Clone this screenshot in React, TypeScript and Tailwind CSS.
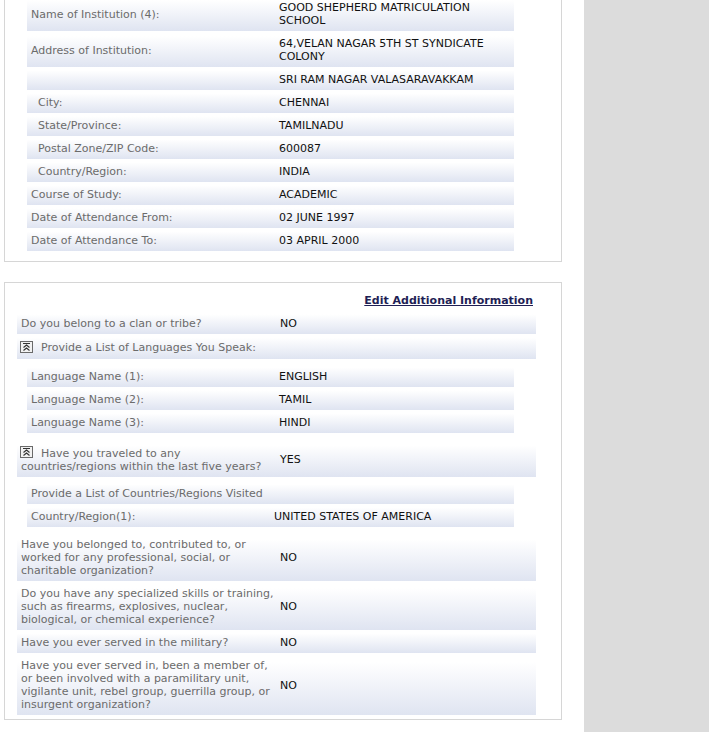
import React from "react";

/**
 * Gözden geçirme sayfası — eğitim bilgisi ve ek bilgiler.
 * Satırlar: gri etiket solda, siyah değer sağda, alttan mavimsi geçişli zemin.
 */

const rowBg = "bg-[linear-gradient(to_bottom,#ffffff_15%,#dfe4f1)]";
const pad = "pt-[6px] pb-[4px]";
const label = "pl-[4px] text-[#6b6b6b] whitespace-nowrap";
const value = "text-[#111] whitespace-nowrap";

function Collapse() {
  return (
    <svg
      width="13"
      height="12"
      viewBox="0 0 13 12"
      className="inline-block align-[-1px] mr-[8px]"
    >
      <rect x="0.5" y="0.5" width="12" height="11" fill="#f2f2f2" stroke="#6a6a6a" />
      <path d="M3 2.5h7" stroke="#333" strokeWidth="1" />
      <path d="M3.5 6.5l3-2.5 3 2.5M3.5 9.5l3-2.5 3 2.5" fill="none" stroke="#333" strokeWidth="1.1" />
    </svg>
  );
}

type Row = { l: React.ReactNode; v: string; sub?: boolean };

function SubRow({ l, v, sub }: Row) {
  return (
    <div className={`flex items-center ${rowBg} ${pad}`}>
      <div className={`${label} w-[252px] ${sub ? "pl-[11px]" : ""}`}>{l}</div>
      <div className={value}>{v}</div>
    </div>
  );
}

function OuterRow({ l, v }: { l: React.ReactNode; v: string }) {
  return (
    <div className={`flex items-center ${pad} ${rowBg}`}>
      <div className={`${label} w-[263px]`}>{l}</div>
      <div className={value}>{v}</div>
    </div>
  );
}

const school: Row[] = [
  { l: "", v: "SRI RAM NAGAR VALASARAVAKKAM" },
  { l: "City:", v: "CHENNAI", sub: true },
  { l: "State/Province:", v: "TAMILNADU", sub: true },
  { l: "Postal Zone/ZIP Code:", v: "600087", sub: true },
  { l: "Country/Region:", v: "INDIA", sub: true },
  { l: "Course of Study:", v: "ACADEMIC" },
  { l: "Date of Attendance From:", v: "02 JUNE 1997" },
  { l: "Date of Attendance To:", v: "03 APRIL 2000" },
];

export default function App() {
  return (
    <div className="flex min-h-screen bg-white font-['DejaVu_Sans',Verdana,sans-serif] text-[11px] leading-[13px]">
      <div className="w-[584px] shrink-0 pl-[4px] pr-[22px] pb-[12px]">
        {/* Okul paneli (üstü kaydırılmış) */}
        <div className="-mt-[5px] border border-t-0 border-[#d6d6d6] pl-[22px] pb-[10px]">
          <div className="w-[487px]">
            <div className={`flex items-center ${pad} ${rowBg}`}>
              <div className={`${label} w-[252px]`}>Name of Institution (4):</div>
              <div className={value}>
                GOOD SHEPHERD MATRICULATION
                <br />
                SCHOOL
              </div>
            </div>
            <div className={`flex items-center ${pad} ${rowBg}`}>
              <div className={`${label} w-[252px]`}>Address of Institution:</div>
              <div className={value}>
                64,VELAN NAGAR 5TH ST SYNDICATE
                <br />
                COLONY
              </div>
            </div>
            {school.map((r, i) => (
              <SubRow key={i} {...r} />
            ))}
          </div>
        </div>

        {/* Ek bilgiler paneli */}
        <div className="mt-[20px] border border-[#d6d6d6] pl-[12px] pt-[11px] pb-[4px]">
          <div className="w-[519px]">
            <div className="flex justify-end pr-[3px] mb-[4px]">
              <a href="#" className="font-bold text-[#1f1f55] underline underline-offset-[1px]">
                Edit Additional Information
              </a>
            </div>

            <OuterRow l="Do you belong to a clan or tribe?" v="NO" />
            <div className={`flex items-center h-[25px] pt-[1px] ${rowBg}`}>
              <div className="pl-[3px] text-[#6b6b6b] whitespace-nowrap flex items-center">
                <Collapse />
                Provide a List of Languages You Speak:
              </div>
            </div>

            <div className="ml-[10px] w-[487px] mt-[5px] mb-[7px]">
              <SubRow l="Language Name (1):" v="ENGLISH" />
              <SubRow l="Language Name (2):" v="TAMIL" />
              <SubRow l="Language Name (3):" v="HINDI" />
            </div>

            <div className={`flex items-center ${pad} ${rowBg}`}>
              <div className="w-[263px] pl-[3px] text-[#6b6b6b] whitespace-nowrap">
                <Collapse />
                Have you traveled to any
                <br />
                <span className="pl-[1px]">countries/regions within the last five years?</span>
              </div>
              <div className={value}>YES</div>
            </div>

            <div className="ml-[10px] w-[487px] mt-[4px] mb-[5px]">
              <div className={`${pad} ${rowBg}`}>
                <div className={label}>Provide a List of Countries/Regions Visited</div>
              </div>
              <div className={`flex items-center ${pad} ${rowBg}`}>
                <div className={`${label} w-[247px]`}>Country/Region(1):</div>
                <div className={value}>UNITED STATES OF AMERICA</div>
              </div>
            </div>

            <OuterRow
              l={
                <>
                  Have you belonged to, contributed to, or
                  <br />
                  worked for any professional, social, or
                  <br />
                  charitable organization?
                </>
              }
              v="NO"
            />
            <OuterRow
              l={
                <>
                  Do you have any specialized skills or training,
                  <br />
                  such as firearms, explosives, nuclear,
                  <br />
                  biological, or chemical experience?
                </>
              }
              v="NO"
            />
            <OuterRow l="Have you ever served in the military?" v="NO" />
            <OuterRow
              l={
                <>
                  Have you ever served in, been a member of,
                  <br />
                  or been involved with a paramilitary unit,
                  <br />
                  vigilante unit, rebel group, guerrilla group, or
                  <br />
                  insurgent organization?
                </>
              }
              v="NO"
            />
          </div>
        </div>
      </div>
      <div className="flex-1 bg-[#dcdcdc]" />
    </div>
  );
}
